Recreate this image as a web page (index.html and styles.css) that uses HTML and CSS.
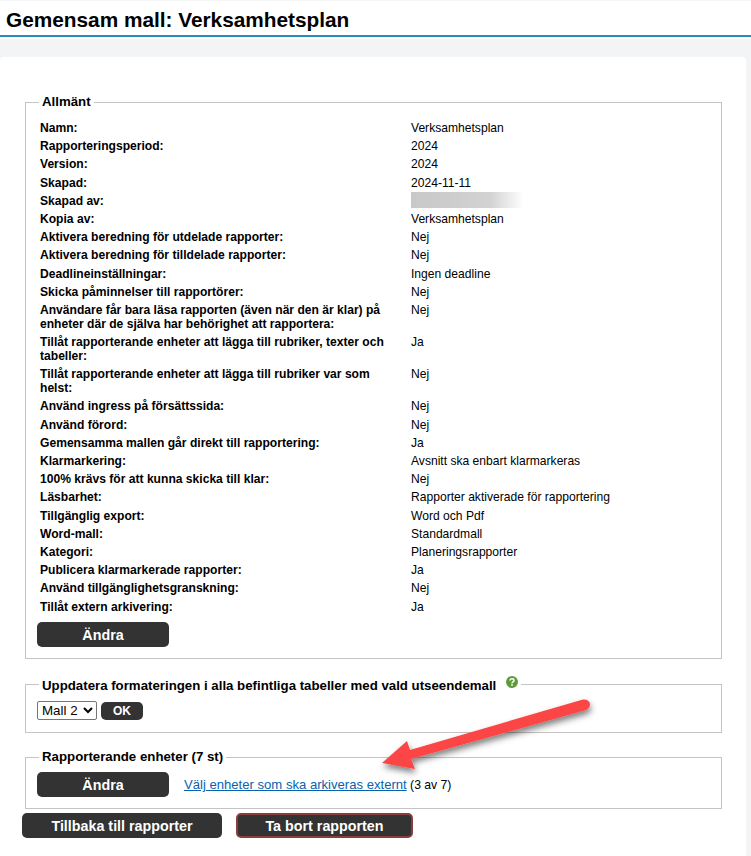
FILE: index.html
```html
<!DOCTYPE html>
<html lang="en">
<head>
    <meta charset="UTF-8">
    <meta name="viewport" content="width=device-width, initial-scale=1.0">
    <title>Gemensam mall: Verksamhetsplan</title>
    <link rel="stylesheet" href="styles.css">
</head>
<body>
    <div class="page-header">
        <h1>Gemensam mall: Verksamhetsplan</h1>
    </div>

    <div class="content">
        <fieldset class="box box-general">
            <legend>Allmänt</legend>
            <table class="info">
                <tr><th>Namn:</th><td>Verksamhetsplan</td></tr>
                <tr><th>Rapporteringsperiod:</th><td>2024</td></tr>
                <tr><th>Version:</th><td>2024</td></tr>
                <tr><th>Skapad:</th><td>2024-11-11</td></tr>
                <tr><th>Skapad av:</th><td><div class="blurred"></div></td></tr>
                <tr><th>Kopia av:</th><td>Verksamhetsplan</td></tr>
                <tr><th>Aktivera beredning för utdelade rapporter:</th><td>Nej</td></tr>
                <tr><th>Aktivera beredning för tilldelade rapporter:</th><td>Nej</td></tr>
                <tr><th>Deadlineinställningar:</th><td>Ingen deadline</td></tr>
                <tr><th>Skicka påminnelser till rapportörer:</th><td>Nej</td></tr>
                <tr><th>Användare får bara läsa rapporten (även när den är klar) på enheter där de själva har behörighet att rapportera:</th><td>Nej</td></tr>
                <tr><th>Tillåt rapporterande enheter att lägga till rubriker, texter och tabeller:</th><td>Ja</td></tr>
                <tr><th>Tillåt rapporterande enheter att lägga till rubriker var som helst:</th><td>Nej</td></tr>
                <tr><th>Använd ingress på försättssida:</th><td>Nej</td></tr>
                <tr><th>Använd förord:</th><td>Nej</td></tr>
                <tr><th>Gemensamma mallen går direkt till rapportering:</th><td>Ja</td></tr>
                <tr><th>Klarmarkering:</th><td>Avsnitt ska enbart klarmarkeras</td></tr>
                <tr><th>100% krävs för att kunna skicka till klar:</th><td>Nej</td></tr>
                <tr><th>Läsbarhet:</th><td>Rapporter aktiverade för rapportering</td></tr>
                <tr><th>Tillgänglig export:</th><td>Word och Pdf</td></tr>
                <tr><th>Word-mall:</th><td>Standardmall</td></tr>
                <tr><th>Kategori:</th><td>Planeringsrapporter</td></tr>
                <tr><th>Publicera klarmarkerade rapporter:</th><td>Ja</td></tr>
                <tr><th>Använd tillgänglighetsgranskning:</th><td>Nej</td></tr>
                <tr><th>Tillåt extern arkivering:</th><td>Ja</td></tr>
            </table>
            <button class="btn btn-wide">Ändra</button>
        </fieldset>

        <fieldset class="box box-format">
            <legend>Uppdatera formateringen i alla befintliga tabeller med vald utseendemall
                <svg class="help" viewBox="0 0 12 12" width="12" height="12">
                    <circle cx="6" cy="6" r="6" fill="#5f9a3c"/>
                    <path d="M4 4.6C4 3.4 4.9 2.8 6 2.8s2 .6 2 1.7c0 1.5-2 1.4-2 2.8" fill="none" stroke="#fff" stroke-width="1.5"/>
                    <rect x="5.2" y="8.1" width="1.6" height="1.6" fill="#fff"/>
                </svg>
            </legend>
            <div class="row">
                <select class="template-select"><option>Mall 2</option></select>
                <button class="btn btn-small">OK</button>
            </div>
        </fieldset>

        <fieldset class="box box-units">
            <legend>Rapporterande enheter (7 st)</legend>
            <div class="row row-units">
                <button class="btn btn-wide">Ändra</button>
                <span class="unit-link"><a href="#">Välj enheter som ska arkiveras externt</a> (3 av 7)</span>
            </div>
        </fieldset>

        <div class="actions">
            <button class="btn btn-back">Tillbaka till rapporter</button>
            <button class="btn btn-delete">Ta bort rapporten</button>
        </div>
    </div>

    <svg class="arrow" viewBox="0 0 751 856" width="751" height="856">
        <defs>
            <filter id="arrowShadow" x="-10%" y="-20%" width="120%" height="150%">
                <feDropShadow dx="1" dy="4" stdDeviation="3" flood-color="#000" flood-opacity="0.5"/>
            </filter>
        </defs>
        <path d="M382 763 L407 741 L410 750 L583 699.500 Q589 699 590 704 Q590 708 586 710 L411 759 L415 769 Z" fill="#fc4444" filter="url(#arrowShadow)"/>
    </svg>
</body>
</html>
```

FILE: styles.css
```css
body {
    font-family: "Liberation Sans", Arial, sans-serif;
    font-size: 12px;
    color: #000;
    background-color: #f3f4f6;
    margin: 0;
    padding: 1px 0 0;
    height: 855px;
    overflow: hidden;
    position: relative;
}
.page-header {
    background-color: #fff;
    border-bottom: 2px solid #2a8bbd;
    box-shadow: 0 2px 0 #fff;
    height: 34px;
    padding-left: 6px;
}
h1 {
    font-size: 20.8px;
    line-height: 26px;
    margin: 0;
    padding-top: 6px;
}
.content {
    background-color: #fff;
    border-radius: 4px 4px 0 0;
    margin: 20px 5px 0 0;
    padding: 37px 0 0 25px;
    height: 762px;
}
.box {
    border: 1px solid #c4c4c4;
    margin: 0;
    padding: 0 11px;
    width: 697px;
    box-sizing: border-box;
}
legend {
    font-size: 13.25px;
    font-weight: bold;
    line-height: 16px;
    margin-left: 2px;
    padding: 0 3px;
}
.box-general {
    height: 565px;
}
.box-format {
    height: 59px;
    margin-top: 15px;
}
.box-format legend {
    padding-top: 2px;
}
.box-units {
    height: 60px;
    margin-top: 16px;
}
.info {
    border-collapse: collapse;
    width: 100%;
    margin-top: 11px;
    table-layout: fixed;
    font-size: 12.1px;
}
.info th {
    font-weight: bold;
    text-align: left;
    vertical-align: top;
    width: 360px;
    padding: 0 7px 4.2px 3px;
    line-height: 14px;
}
.info td {
    vertical-align: top;
    padding: 0 0 4.2px 4px;
    line-height: 14px;
}
.blurred {
    width: 113px;
    height: 16px;
    margin-top: -2px;
    background: linear-gradient(to right, #c8c8c8, #d2d2d2 70%, #fff);
}
.btn {
    background-color: #333;
    color: #fff;
    border: none;
    border-radius: 5px;
    font-family: inherit;
    font-size: 14.3px;
    font-weight: bold;
    padding: 0;
}
.btn-wide {
    width: 132px;
    height: 25px;
    flex: none;
}
.box-general .btn-wide {
    margin-top: 4.5px;
}
.btn-small {
    width: 42px;
    height: 18px;
    font-size: 12px;
}
.row {
    display: flex;
    align-items: center;
    gap: 4px;
    margin-top: 7px;
}
.row-units {
    gap: 15px;
}
.template-select {
    font-family: inherit;
    font-size: 13.33px;
    width: 60px;
    height: 19px;
    padding: 0;
    background-color: #fff;
    border: 1px solid #767676;
    border-radius: 2px;
}
.unit-link {
    font-size: 12.2px;
}
a {
    color: #0563b0;
    font-size: 13.1px;
}
.help {
    vertical-align: 2px;
    margin-left: 6px;
}
.actions {
    display: flex;
    gap: 14px;
    margin: 4px 0 0 -3px;
}
.btn-back {
    width: 200px;
    height: 25px;
}
.btn-delete {
    width: 177px;
    height: 25px;
    border: 2px solid #8a3d3f;
}
.arrow {
    position: absolute;
    top: 0;
    left: 0;
    pointer-events: none;
}
```
